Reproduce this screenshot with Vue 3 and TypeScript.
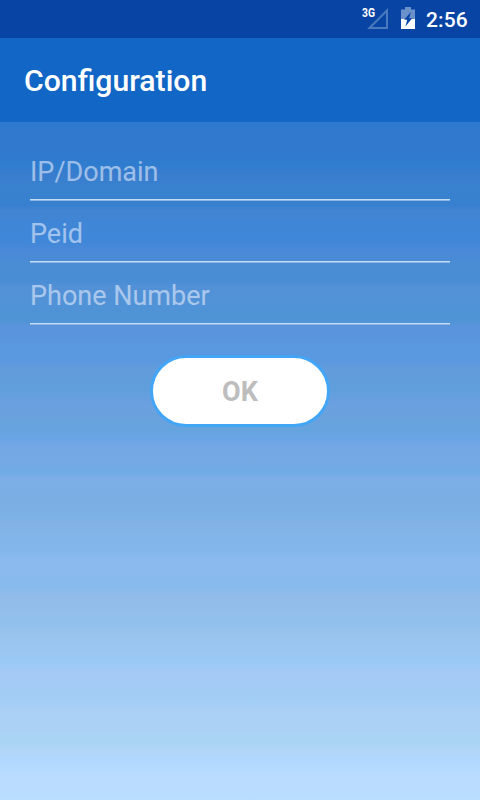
<script setup lang="ts">
import { reactive } from 'vue'

interface Field {
  key: 'host' | 'peid' | 'phone'
  label: string
}

const fields: Field[] = [
  { key: 'host', label: 'IP/Domain' },
  { key: 'peid', label: 'Peid' },
  { key: 'phone', label: 'Phone Number' },
]
const form = reactive({ host: '', peid: '', phone: '' })
</script>

<template>
  <div class="screen">
    <div class="status-bar">
      <svg class="signal" width="28" height="29" viewBox="0 -5 28 29">
        <path d="M26 3.5V21H8.5Z" fill="none" stroke="#4a7abd" stroke-width="2" />
        <text class="network" x="1" y="10.4" textLength="13" lengthAdjust="spacingAndGlyphs">3G</text>
      </svg>
      <svg class="battery" width="14" height="22" viewBox="0 0 14 22">
        <path d="M0 2.5H4V0H10V2.5H14V22H0Z" fill="#6b91cb" />
        <path d="M0 12H14V22H0Z" fill="#fff" />
        <path d="M9.8 5L3.2 12.8H6.2L4.4 19.4L11.2 11.2H8.2Z" fill="#0844a4" />
      </svg>
      <span class="clock">2:56</span>
    </div>
    <header class="app-bar"><h1>Configuration</h1></header>
    <form class="form" @submit.prevent>
      <input
        v-for="field in fields"
        :key="field.key"
        v-model="form[field.key]"
        class="field"
        type="text"
        :placeholder="field.label"
      />
      <button class="ok" type="submit">OK</button>
    </form>
  </div>
</template>

<style>
body {
  margin: 0;
}
</style>

<style scoped>
.screen {
  display: flex;
  flex-direction: column;
  height: 800px;
  font-family: Roboto, sans-serif;
  background: linear-gradient(
    #2e78ce 122px, #3079cf 151px, #2f7dcf 166px, #397cce 174px,
    #3982cf 187px, #3780cf 205px, #4285d1 210px, #4086d7 224px,
    #3f87d8 240px, #4a88d9 250px, #4a8dd5 264px, #498dd5 280px,
    #5391d7 288px, #5093d6 307px, #4e95d6 320px, #5a94dc 326px,
    #5997df 345px, #5b98df 362px, #629cdb 368px, #609edc 390px,
    #6ba0e0 403px, #6aa1dd 414px, #66a4de 430px, #68a4e7 438px,
    #73a7e5 445px, #74a9e4 464px, #70abe6 472px, #7caee7 479px,
    #7baee3 500px, #7cb1e5 516px, #83b3e6 525px, #82b7eb 551px,
    #8bb9ee 558px, #88baed 586px, #92bbe9 598px, #91c0ed 624px,
    #9ac4ed 635px, #9ac7f2 652px, #9bcaf6 664px, #a4c9f4 673px,
    #a2cdf5 701px, #aad0f5 710px, #abd2f5 730px, #a9d4f4 744px,
    #b1d5f8 750px, #b1d8ff 762px, #b9dbff 775px, #badeff 800px
  );
}

.status-bar {
  display: flex;
  justify-content: flex-end;
  box-sizing: border-box;
  height: 38px;
  padding-right: 12px;
  background: #0844a4;
  color: #fff;
}

.signal {
  margin-top: 2px;
}

.network {
  font: 700 12.5px Roboto, sans-serif;
  fill: #fff;
}

.battery {
  margin: 7px 11px 0 12px;
}

.clock {
  width: 42px;
  font-size: 21px;
  font-weight: 500;
  letter-spacing: 0.15px;
  line-height: 40px;
}

.app-bar {
  display: flex;
  align-items: center;
  box-sizing: border-box;
  height: 84px;
  padding: 2px 0 0 24px;
  background: #1266c5;
  color: #fff;
}

h1 {
  margin: 0;
  font-size: 30.2px;
  font-weight: 500;
  line-height: 36px;
}

.form {
  display: flex;
  flex-direction: column;
  padding: 17px 30px 0;
}

.field {
  box-sizing: border-box;
  width: 100%;
  height: 62px;
  padding: 4px 0 0;
  border: 0;
  outline: 0;
  background: linear-gradient(#c4dcf5 50%, #8db6e5 50%) bottom / 100% 2px no-repeat;
  color: #fff;
  font: 400 27px Roboto, sans-serif;
}

.field::placeholder {
  color: #f2f5ff;
  opacity: 0.55;
}

.ok {
  align-self: center;
  width: 180px;
  height: 72px;
  margin-top: 30px;
  padding: 2px 0 0;
  border: 3px solid #42a5f5;
  border-radius: 36px;
  background: #fff;
  color: #bdbdbd;
  font: 700 27px Roboto, sans-serif;
}
</style>
